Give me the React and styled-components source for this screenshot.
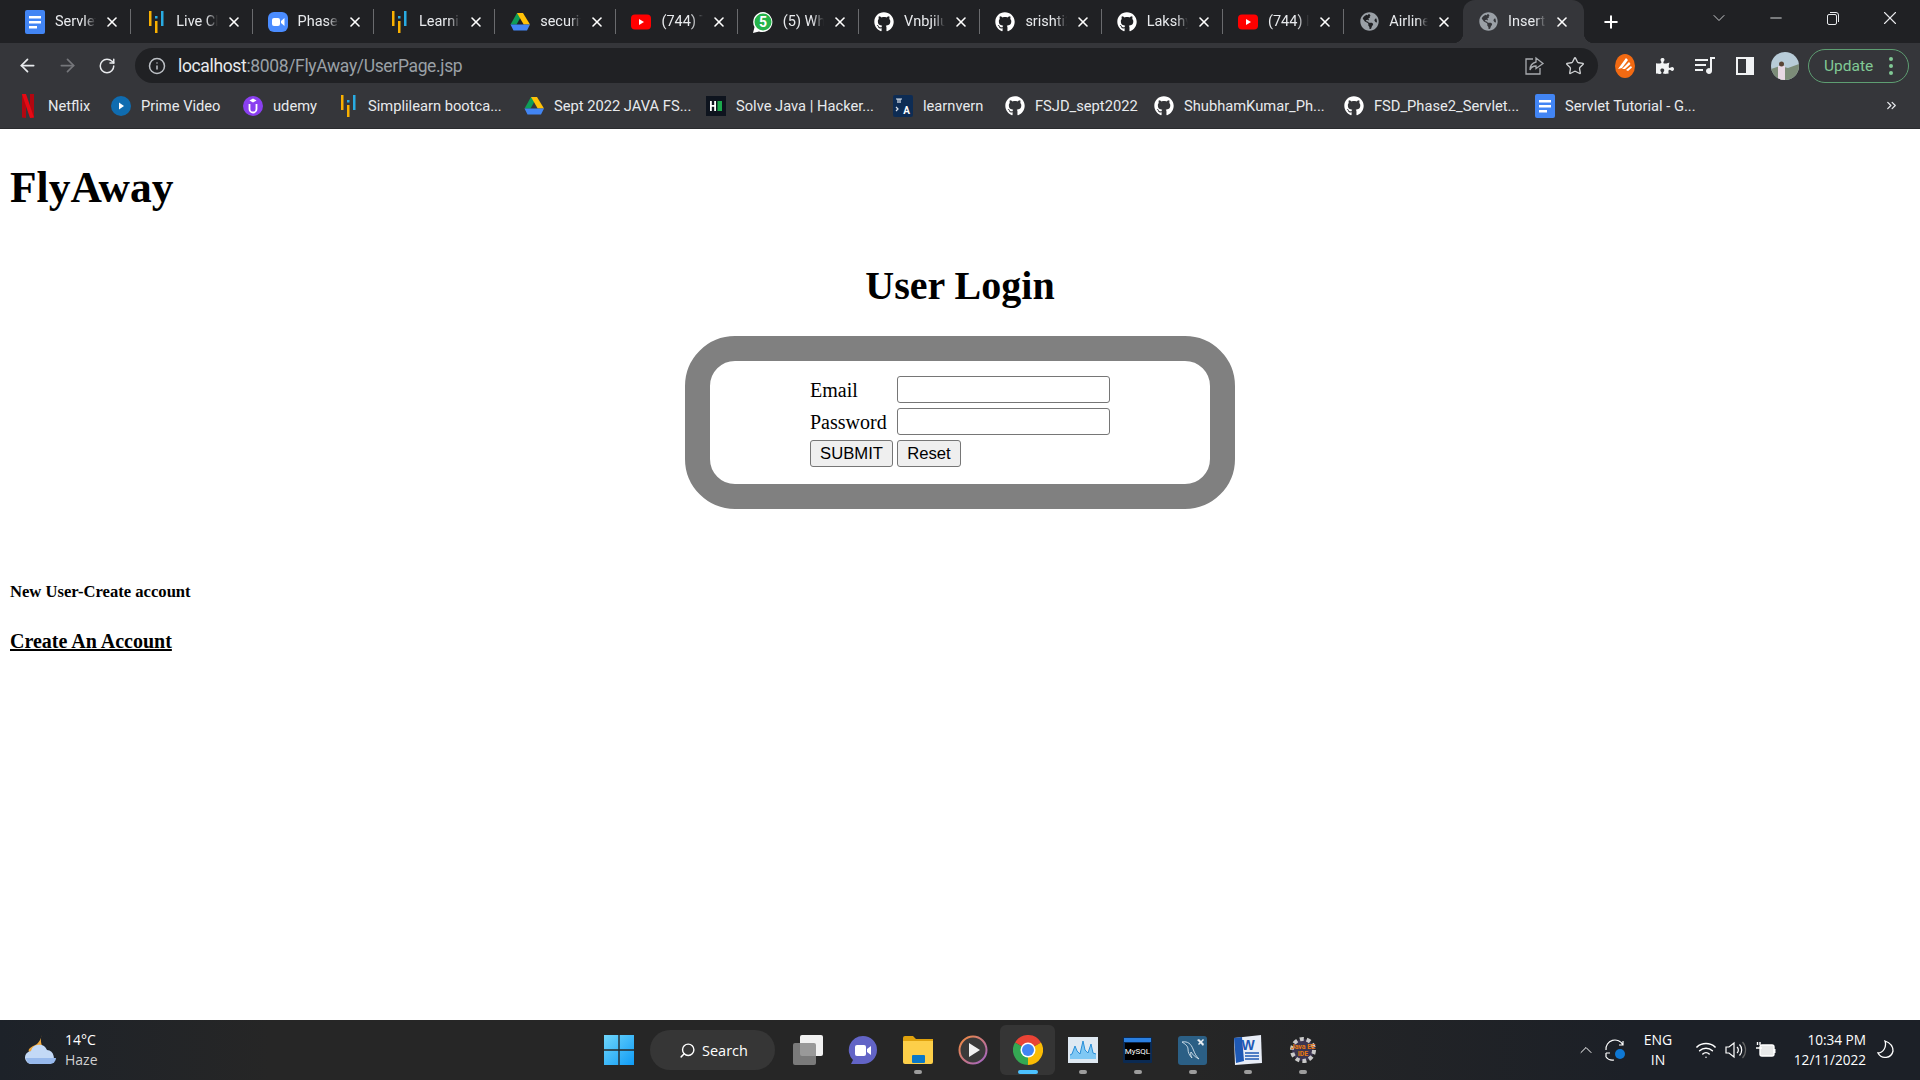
import React from 'react';
import styled, { createGlobalStyle } from 'styled-components';
import { ArrowLeft, ArrowRight, RotateCw, Info, Star, X, Plus, ChevronDown, ChevronUp, ChevronsRight, Minus, Search, Wifi } from 'lucide-react';
import { FaGithub, FaGlobeAmericas, FaPuzzlePiece } from 'react-icons/fa';

const GlobalStyle = createGlobalStyle`
    html, body { margin: 0; padding: 0; background: #fff; }
    body { font-family: "Liberation Serif", "Times New Roman", serif; overflow: hidden; }
`;

const UI_FONT = '"Roboto", "Noto Sans", sans-serif';

const Screen = styled.div`
    width: 1920px;
    height: 1080px;
    display: flex;
    flex-direction: column;
`;

/* ---- favicons ---- */
const DocsIcon = () => (
    <svg width="20" height="24" viewBox="0 0 20 24">
        <rect width="20" height="24" rx="2" fill="#4285f4" />
        <path d="M4 6h12v2.500H4zM4 11h12v2.500H4zM4 16h8v2.500H4z" fill="#fff" />
    </svg>
);
const BarsIcon = () => (
    <svg width="20" height="24" viewBox="0 0 20 24">
        <rect x="3" y="1" width="2.5" height="15" fill="#f9b000" />
        <rect x="9" y="11" width="2.5" height="12" fill="#f9b000" />
        <rect x="9" y="6" width="2.5" height="2.5" fill="#29abe2" />
        <rect x="15" y="1" width="2.5" height="15" fill="#29abe2" />
    </svg>
);
const ZoomIcon = () => (
    <svg width="20" height="24" viewBox="0 0 20 24">
        <rect y="2" width="20" height="20" rx="6" fill="#4a8cff" />
        <rect x="4" y="8" width="8" height="8" rx="2" fill="#fff" />
        <path d="M13 11l3.500-3v8l-3.500-3z" fill="#fff" />
    </svg>
);
const DriveIcon = () => (
    <svg width="20" height="18" viewBox="0 0 20 18">
        <path d="M7 0h6l-6.500 11.500h-6z" fill="#0f9d58" />
        <path d="M7 0h6l7 11.500h-6.300z" fill="#ffc107" />
        <path d="M0.500 11.500l3 6h13.500l3-6z" fill="#4285f4" />
    </svg>
);
const YoutubeIcon = () => (
    <svg width="20" height="16" viewBox="0 0 20 16">
        <rect width="20" height="15" y="0.500" rx="4" fill="#f00" />
        <path d="M8 5l5 3-5 3z" fill="#fff" />
    </svg>
);
const WhatsappIcon = () => (
    <svg width="20" height="24" viewBox="0 0 20 24">
        <path d="M10 2a10 10 0 0 0-8.500 15L0 23l6-1.600A10 10 0 1 0 10 2z" fill="#fff" />
        <circle cx="10" cy="12" r="8.500" fill="#25b34a" />
        <text x="10" y="17" textAnchor="middle" fontSize="14" fontWeight="700" fill="#fff" fontFamily="Roboto, sans-serif">5</text>
    </svg>
);
const NetflixIcon = () => (
    <svg width="14" height="24" viewBox="0 0 14 24">
        <path d="M1 0h4v24l-4-.6z" fill="#b20710" />
        <path d="M9 0h4v23.400l-4 .6z" fill="#b20710" />
        <path d="M1 0h4l8 23.400-4 .6z" fill="#e50914" />
    </svg>
);
const PrimeIcon = () => (
    <svg width="20" height="24" viewBox="0 0 20 24">
        <circle cx="10" cy="12" r="10" fill="#0f6cb0" />
        <path d="M8 8.500l5 3.500-5 3.500z" fill="#fff" />
    </svg>
);
const UdemyIcon = () => (
    <svg width="20" height="24" viewBox="0 0 20 24">
        <circle cx="10" cy="12" r="10" fill="#8a3ff0" />
        <path d="M6.500 10v5a3.500 3.500 0 0 0 7 0v-5" fill="none" stroke="#fff" strokeWidth="1.800" />
        <path d="M10 4.500l3.500 2-3.500 2-3.500-2z" fill="#fff" />
    </svg>
);
const HackerIcon = () => (
    <svg width="20" height="20" viewBox="0 0 20 20">
        <rect width="20" height="20" fill="#0e141e" />
        <path d="M4 5h1.800v4h2.400V5H10v10H8.200v-4.200H5.800V15H4z" fill="#fff" />
        <rect x="11.500" y="5" width="4.500" height="10" fill="#1ba94c" />
    </svg>
);
const LearnvernIcon = () => (
    <svg width="20" height="24" viewBox="0 0 20 24">
        <rect y="1" width="20" height="22" rx="2" fill="#0d2c54" />
        <path d="M3 5h6M5 5v4M7 5v4M3 13l2 2-2 2" stroke="#dfe6ee" strokeWidth="1.200" fill="none" />
        <text x="13.500" y="20" textAnchor="middle" fontSize="10" fontWeight="700" fill="#fff" fontFamily="Roboto, sans-serif">A</text>
    </svg>
);
const GithubIcon = () => <FaGithub size={20} color="#fff" />;
const GlobeIcon = () => <FaGlobeAmericas size={19} color="#9aa0a6" />;

/* ---- tab strip ---- */
const TabStrip = styled.div`
    height: 43px;
    flex: none;
    background: #202124;
    display: flex;
    align-items: stretch;
    padding-left: 10px;
    font-family: ${UI_FONT};
    position: relative;
`;

const Tab = styled.div`
    width: ${(props) => props.$w || 121.3}px;
    box-sizing: border-box;
    flex: none;
    display: flex;
    align-items: center;
    padding: 0 ${(props) => (props.$active ? 14 : 11)}px 0 15px;
    gap: 8px;
    position: relative;
    color: #e8eaed;
    background: ${(props) => (props.$active ? '#35363a' : 'transparent')};
    border-radius: ${(props) => (props.$active ? '12px 12px 0 0' : '0')};

    &::after {
        content: '';
        position: absolute;
        right: 0;
        top: 9px;
        bottom: 9px;
        width: 1px;
        background: ${(props) => (props.$noSep ? 'transparent' : '#6a6b6e')};
    }
`;

const Flare = styled.span`
    position: absolute;
    bottom: 0;
    width: 10px;
    height: 10px;
    ${(props) => (props.$side === 'left'
        ? 'left: -10px; background: radial-gradient(circle at 0 0, transparent 10px, #35363a 10.5px);'
        : 'right: -10px; background: radial-gradient(circle at 100% 0, transparent 10px, #35363a 10.5px);')}
`;

const FavSlot = styled.span`
    width: 20px;
    height: 24px;
    flex: none;
    display: flex;
    align-items: center;
    justify-content: center;
    margin-right: 2px;
`;

const TabTitle = styled.span`
    flex: 1;
    min-width: 0;
    overflow: hidden;
    white-space: nowrap;
    font-size: 14.5px;
    -webkit-mask-image: linear-gradient(to right, #000 72%, transparent 100%);
    mask-image: linear-gradient(to right, #000 72%, transparent 100%);
`;

const NewTab = styled.div`
    width: 54px;
    display: flex;
    align-items: center;
    justify-content: center;
    color: #fff;
`;

const WindowControls = styled.div`
    margin-left: auto;
    margin-right: 1.5px;
    display: flex;
    align-items: flex-start;
    color: #e8eaed;
`;

const WinButton = styled.div`
    width: 57px;
    height: 36px;
    display: flex;
    align-items: center;
    justify-content: center;
`;

/* ---- toolbar ---- */
const Toolbar = styled.div`
    height: 41px;
    flex: none;
    box-sizing: border-box;
    background: #35363a;
    display: flex;
    align-items: flex-start;
    padding-top: 5px;
    font-family: ${UI_FONT};
`;

const NavButtons = styled.div`
    width: 135px;
    flex: none;
    height: 35px;
    display: flex;
    align-items: center;
    padding-left: 7px;
    box-sizing: border-box;
`;

const NavSlot = styled.span`
    width: 40px;
    display: flex;
    justify-content: center;
    color: ${(props) => (props.$dim ? '#75767a' : '#e8eaed')};
`;

const UrlBox = styled.div`
    width: 1463px;
    height: 35px;
    flex: none;
    background: #202124;
    border-radius: 18px;
    display: flex;
    align-items: center;
    padding: 0 3px 0 13px;
    box-sizing: border-box;
    color: #bdc1c6;
`;

const UrlText = styled.div`
    margin-left: 12px;
    font-size: 17.5px;
    letter-spacing: -0.35px;
    color: #9aa0a6;
    flex: 1;
    b { font-weight: 400; color: #e8eaed; }
`;

const UrlAction = styled.span`
    width: 40px;
    display: flex;
    justify-content: center;
    color: #d0d2d4;
`;

const ToolIcons = styled.div`
    display: flex;
    height: 35px;
    align-items: center;
    margin-left: 7px;
`;

const ToolSlot = styled.span`
    width: 40px;
    display: flex;
    justify-content: center;
    color: #f1f3f4;
`;

const UpdatePill = styled.div`
    margin-left: 3px;
    width: 101px;
    height: 34px;
    box-sizing: border-box;
    border: 1.5px solid #5e9e72;
    border-radius: 17px;
    display: flex;
    align-items: center;
    padding-left: 15px;
    color: #81c995;
    font-size: 15.5px;
`;

const Dots = styled.span`
    margin-left: 16px;
    width: 4px;
    display: flex;
    flex-direction: column;
    gap: 3px;
    i { width: 4px; height: 4px; border-radius: 50%; background: #81c995; display: block; }
`;

/* ---- bookmarks ---- */
const BookmarkBar = styled.div`
    height: 44.5px;
    flex: none;
    box-sizing: border-box;
    background: #35363a;
    border-bottom: 1px solid #2a2b2e;
    display: flex;
    align-items: center;
    padding-left: 18px;
    font-family: ${UI_FONT};
    color: #e8eaed;
    font-size: 14.7px;
`;

const Bookmark = styled.div`
    width: ${(props) => props.$w}px;
    flex: none;
    display: flex;
    align-items: center;
    gap: 8px;
    white-space: nowrap;
`;

const MoreBookmarks = styled.div`
    margin-left: auto;
    margin-right: 21px;
    display: flex;
    color: #e8eaed;
`;

/* ---- page ---- */
const Page = styled.main`
    flex: 1;
    background: #fff;
    padding: 0 10px;
    color: #000;
    overflow: hidden;
`;

const Logo = styled.h1`
    margin: 33px 0 0;
    font-size: 43.5px;
    line-height: 50px;
    font-weight: 700;
`;

const Title = styled.h1`
    margin: 51.5px 0 0;
    font-size: 40px;
    line-height: 46px;
    font-weight: 700;
    text-align: center;
`;

const LoginBox = styled.form`
    width: 400px;
    margin: 26.5px auto 0;
    border: 25px solid #808080;
    border-radius: 50px;
    padding: 15px 0 17px 100px;
    display: grid;
    grid-template-columns: 87px 213px;
    grid-auto-rows: 27.3px;
    row-gap: 5px;
    align-items: center;
    box-sizing: content-box;
`;

const Label = styled.label`
    font-size: 20px;
    padding-top: 2px;
`;

const TextInput = styled.input`
    width: 213px;
    height: 27.3px;
    box-sizing: border-box;
    border: 1.25px solid #767676;
    border-radius: 3px;
    background: #fff;
    padding: 0 3px;
    margin: 0;
`;

const FormButton = styled.button`
    height: 27.3px;
    width: ${(props) => props.$w}px;
    box-sizing: border-box;
    border: 1.25px solid #767676;
    border-radius: 3px;
    background: #efefef;
    color: #000;
    font-family: "Liberation Sans", Arial, sans-serif;
    font-size: 16.67px;
    padding: 0;
    margin: 0;
    display: block;
`;

const NewUser = styled.h5`
    margin: 73px 0 0;
    font-size: 16.6px;
    line-height: 19px;
    font-weight: 700;
`;

const CreateLink = styled.a`
    display: block;
    margin-top: 29px;
    font-size: 20px;
    line-height: 23px;
    font-weight: 700;
    color: #000;
    text-decoration: underline;
`;

/* ---- taskbar ---- */
const Taskbar = styled.footer`
    height: 60px;
    flex: none;
    display: grid;
    grid-template-columns: 1fr auto 1fr;
    align-items: center;
    background: linear-gradient(to right, #1d2229 0, #262626 14%, #262626 62%, #1c2027 85%, #1c2027 100%);
    color: #fff;
    font-family: "Open Sans", "Noto Sans", sans-serif;
    font-size: 14px;
`;

const Weather = styled.div`
    display: flex;
    align-items: center;
    gap: 8px;
    padding-left: 25px;
`;

const TwoLines = styled.div`
    display: flex;
    flex-direction: column;
    line-height: 20px;
    align-items: ${(props) => props.$align || 'flex-start'};
    font-size: ${(props) => props.$size || 14}px;
    span:last-child { color: ${(props) => props.$dim || '#fff'}; }
`;

const Apps = styled.div`
    display: flex;
    align-items: center;
    height: 60px;
    margin-left: 1px;
`;

const SearchPill = styled.div`
    width: 125px;
    height: 40px;
    margin: 0 5px 0 4px;
    border-radius: 20px;
    background: #363636;
    display: flex;
    align-items: center;
    justify-content: center;
    gap: 6px;
    font-size: 14.5px;
    padding-left: 2px;
    box-sizing: border-box;
`;

const AppSlot = styled.div`
    width: 55px;
    height: 50px;
    flex: none;
    display: flex;
    align-items: center;
    justify-content: center;
    position: relative;
    border-radius: 6px;
    background: ${(props) => (props.$active ? '#353535' : 'transparent')};

    &::after {
        content: ${(props) => (props.$dot ? "''" : 'none')};
        position: absolute;
        bottom: 1px;
        left: 50%;
        transform: translateX(-50%);
        width: ${(props) => (props.$active ? '20px' : '8px')};
        height: 4px;
        border-radius: 2px;
        background: ${(props) => (props.$active ? '#4cc2ff' : '#9d9d9d')};
    }
`;

const Tray = styled.div`
    display: flex;
    align-items: center;
    justify-content: flex-end;
    padding-right: 19px;
    color: #fff;
`;

const TraySlot = styled.span`
    width: ${(props) => props.$w || 30}px;
    display: flex;
    justify-content: center;
`;

const TrayText = styled.div`
    width: ${(props) => props.$w}px;
    text-align: center;
    margin: ${(props) => props.$m || '0'};
`;

/* ---- taskbar icons ---- */
const WeatherIcon = () => (
    <svg width="32" height="30" viewBox="0 0 32 30">
        <path d="M17 0c-2 4-1 9 1 13L4 17C2 13 9 11 12 9c2-2 4-5 5-9z" fill="#f2a93b" />
        <path d="M7 29a6.500 6.500 0 0 1-1-13 8.500 8.500 0 0 1 16-1 7.500 7.500 0 0 1 3 14z" fill="#c3d9f6" />
        <path d="M1 23a6 6 0 0 0 6 6h18a6 6 0 0 0 6-6z" fill="#97b9ec" />
    </svg>
);
const WindowsIcon = () => (
    <svg width="30" height="30" viewBox="0 0 30 30">
        <defs>
            <linearGradient id="win" x1="0" y1="0" x2="1" y2="1">
                <stop offset="0" stopColor="#6fd6fb" />
                <stop offset="1" stopColor="#0f9bf5" />
            </linearGradient>
        </defs>
        <path d="M0 0h14.300v14.300H0zM15.700 0H30v14.300H15.700zM0 15.700h14.300V30H0zM15.700 15.700H30V30H15.700z" fill="url(#win)" />
    </svg>
);
const TaskViewIcon = () => (
    <svg width="30" height="30" viewBox="0 0 30 30">
        <rect x="7" y="0" width="23" height="21" rx="2" fill="#f1f1f1" />
        <rect x="0" y="8" width="23" height="22" rx="2" fill="#8a8a8a" fillOpacity="0.85" />
    </svg>
);
const MeetIcon = () => (
    <svg width="30" height="30" viewBox="0 0 30 30">
        <path d="M15 1a14 14 0 0 1 0 28H3l2-4A14 14 0 0 1 15 1z" fill="#6264c6" />
        <rect x="7" y="10" width="11" height="11" rx="2" fill="#fff" />
        <path d="M19 14l4-3v9l-4-3z" fill="#fff" />
    </svg>
);
const FolderIcon = () => (
    <svg width="30" height="28" viewBox="0 0 30 28">
        <path d="M0 2a2 2 0 0 1 2-2h8l3 3h17v6H0z" fill="#e0a20d" />
        <path d="M0 5h30v21a2 2 0 0 1-2 2H2a2 2 0 0 1-2-2z" fill="#fdcf49" />
        <rect x="9" y="19" width="13" height="8" rx="1" fill="#0a78c8" />
    </svg>
);
const PlayerIcon = () => (
    <svg width="30" height="30" viewBox="0 0 30 30">
        <defs>
            <linearGradient id="ring" x1="0" y1="0" x2="1" y2="1">
                <stop offset="0" stopColor="#f28b3c" />
                <stop offset="1" stopColor="#9f63c9" />
            </linearGradient>
        </defs>
        <circle cx="15" cy="15" r="13.500" fill="#3a3a3a" stroke="url(#ring)" strokeWidth="2" />
        <path d="M11 8l11 7-11 7z" fill="#f2f2f2" />
    </svg>
);
const ChromeIcon = () => (
    <svg width="30" height="30" viewBox="0 0 30 30">
        <path d="M15 15L2 7.500A15 15 0 0 1 28 7.500z" fill="#ea4335" />
        <path d="M15 15L28 7.500A15 15 0 0 1 15 30z" fill="#fbbc05" />
        <path d="M15 15L15 30A15 15 0 0 1 2 7.500z" fill="#34a853" />
        <circle cx="15" cy="15" r="7.500" fill="#fff" />
        <circle cx="15" cy="15" r="6" fill="#4285f4" />
    </svg>
);
const ChartIcon = () => (
    <svg width="30" height="26" viewBox="0 0 30 26">
        <rect width="30" height="26" fill="#dfe9f2" />
        <path d="M2 22h26V17l-3-1-2-9-3 9-3-3-2-9-3 13-3-3-2-5-3 8-2 1z" fill="#7fc8f4" />
        <path d="M2 18l2-1 3-8 2 5 3 3 3-13 2 9 3 3 3-9 2 9 3 1" fill="none" stroke="#2a8fd8" strokeWidth="1" />
    </svg>
);
const MysqlIcon = () => (
    <svg width="29" height="26" viewBox="0 0 29 26">
        <rect width="29" height="26" rx="1" fill="#0b2a52" />
        <rect x="1" y="1" width="27" height="4" fill="#2a7fe0" />
        <rect x="2" y="6" width="25" height="17" fill="#000" />
        <text x="14.500" y="17" textAnchor="middle" fontSize="8" fill="#fff" fontFamily="Roboto, sans-serif">MySQL</text>
    </svg>
);
const WorkbenchIcon = () => (
    <svg width="29" height="29" viewBox="0 0 29 29">
        <rect width="29" height="29" rx="3" fill="#2b5f85" />
        <path d="M4 6c6-1 9 2 11 7s3 7 6 10c-4-2-6-4-8-7-1 2 0 4 1 6-3-3-4-6-4-9S7 8 4 6z" fill="none" stroke="#d6e4ee" strokeWidth="0.900" />
        <path d="M20 8l5-5 1 1-5 5z" fill="#e8eef3" />
        <path d="M19 4l2-1 5 5-1 2z" fill="#e8eef3" />
    </svg>
);
const WordIcon = () => (
    <svg width="29" height="30" viewBox="0 0 29 30">
        <path d="M1 3l27-3 1 28-27 2z" fill="#e9eef7" />
        <path d="M1 3l8-1 2 24-8 2z" fill="#1e59b5" />
        <text x="15" y="15" textAnchor="middle" fontSize="14" fontWeight="700" fill="#1e59b5" fontFamily="Liberation Sans, sans-serif">W</text>
        <path d="M12 18h14M12 21h14M12 24h14" stroke="#1e59b5" strokeWidth="1.500" />
    </svg>
);
const JavaEEIcon = () => (
    <svg width="30" height="30" viewBox="0 0 30 30">
        <circle cx="15" cy="15" r="11" fill="#3b3550" stroke="#c9c9c9" strokeWidth="4" strokeDasharray="4 2.900" />
        <text x="15" y="13.500" textAnchor="middle" fontSize="7" fontWeight="700" fill="#e87a10" fontFamily="Roboto, sans-serif">Java EE</text>
        <text x="15" y="21" textAnchor="middle" fontSize="7" fontWeight="700" fill="#e87a10" fontFamily="Roboto, sans-serif">IDE</text>
    </svg>
);

/* ---- tray + toolbar icons ---- */
const SyncIcon = () => (
    <svg width="22" height="24" viewBox="0 0 22 24" fill="none" stroke="#fff" strokeWidth="1.200">
        <path d="M1 12a9 9 0 0 1 17-5M18 3v4h-4" />
        <path d="M1 15h4M1 15v4M1 19a8 8 0 0 0 8 3" />
        <circle cx="15" cy="16" r="5" fill="#0f78d4" stroke="none" />
    </svg>
);
const SpeakerIcon = () => (
    <svg width="22" height="20" viewBox="0 0 22 20" fill="none" stroke="#fff" strokeWidth="1.200">
        <path d="M1 7v6h3l5 4V3L4 7z" />
        <path d="M12 7a4 4 0 0 1 0 6M14.500 4.500a8 8 0 0 1 0 11" />
        <path d="M17.500 2a12 12 0 0 1 0 16" stroke="#666" />
    </svg>
);
const BatteryIcon = () => (
    <svg width="22" height="18" viewBox="0 0 22 18" fill="none" stroke="#fff" strokeWidth="1.400">
        <rect x="5" y="4" width="14" height="11" rx="2" fill="#fff" fillOpacity="0.9" />
        <path d="M19.500 8v4" strokeWidth="2" />
        <path d="M1 7h6M2.500 4V1M5 4V1" />
    </svg>
);
const MoonIcon = () => (
    <svg width="18" height="20" viewBox="0 0 18 20" fill="none" stroke="#fff" strokeWidth="1.300">
        <path d="M8 1c3 1 8 4 8 10a8 8 0 0 1-15 2c5 0 9-6 7-12z" />
    </svg>
);
const ShareIcon = () => (
    <svg width="20" height="20" viewBox="0 0 20 20" fill="none" stroke="#a8abaf" strokeWidth="1.300">
        <path d="M8 3H1v15h14v-6" />
        <path d="M11 2l7 5.500-7 5V10c-3 0-5 1-6 4 0-4 2-7 6-8z" />
    </svg>
);
const OrangeExtIcon = () => (
    <svg width="20" height="24" viewBox="0 0 20 24">
        <ellipse cx="10" cy="12" rx="10" ry="12" fill="#f26a12" />
        <path d="M3 15L11 4l2 2-6 8zM7 15l7-7 1.500 2L10 15zM11 16l5-4 1 1.500-4 3.500z" fill="#fff" />
    </svg>
);
const QueueIcon = () => (
    <svg width="20" height="20" viewBox="0 0 20 20" fill="#f1f3f4">
        <path d="M0 3h13v2H0zM0 8h11v2H0zM0 13h8v2H0z" />
        <path d="M15 1h5v2h-3v12a3 3 0 1 1-2-2.800z" />
    </svg>
);
const SidePanelIcon = () => (
    <svg width="18" height="18" viewBox="0 0 18 18">
        <rect width="18" height="18" fill="#f1f3f4" />
        <rect x="2" y="2" width="8" height="14" fill="#35363a" />
    </svg>
);
const AvatarIcon = () => (
    <svg width="28" height="28" viewBox="0 0 28 28">
        <defs>
            <clipPath id="ava"><circle cx="14" cy="14" r="14" /></clipPath>
        </defs>
        <g clipPath="url(#ava)">
            <rect width="28" height="28" fill="#b8ccd8" />
            <path d="M0 17l9-3 8 2 11-4v16H0z" fill="#7c8c78" />
            <rect x="7" y="14" width="7" height="14" fill="#e8d8e4" />
            <circle cx="10.500" cy="12" r="2.500" fill="#5a4436" />
        </g>
    </svg>
);
const RestoreIcon = () => (
    <svg width="12" height="13" viewBox="0 0 12 13" fill="none" stroke="#e8eaed">
        <rect x="0.500" y="2.500" width="9" height="10" rx="1.500" />
        <path d="M3 0.500h6a2.500 2.500 0 0 1 2.500 2.500v7" />
    </svg>
);

const tabs = [
    { icon: <DocsIcon />, title: 'Servlet Tutorial' },
    { icon: <BarsIcon />, title: 'Live Class' },
    { icon: <ZoomIcon />, title: 'Phase-2' },
    { icon: <BarsIcon />, title: 'Learning' },
    { icon: <DriveIcon />, title: 'security' },
    { icon: <YoutubeIcon />, title: '(744) The' },
    { icon: <WhatsappIcon />, title: '(5) WhatsApp' },
    { icon: <GithubIcon />, title: 'Vnbjilu' },
    { icon: <GithubIcon />, title: 'srishti2' },
    { icon: <GithubIcon />, title: 'Lakshya' },
    { icon: <YoutubeIcon />, title: '(744) How' },
    { icon: <GlobeIcon />, title: 'Airline', w: 118.8 },
];

const bookmarks = [
    { icon: <NetflixIcon />, label: 'Netflix', w: 93 },
    { icon: <PrimeIcon />, label: 'Prime Video', w: 132 },
    { icon: <UdemyIcon />, label: 'udemy', w: 95 },
    { icon: <BarsIcon />, label: 'Simplilearn bootca...', w: 186 },
    { icon: <DriveIcon />, label: 'Sept 2022 JAVA FS...', w: 182 },
    { icon: <HackerIcon />, label: 'Solve Java | Hacker...', w: 187 },
    { icon: <LearnvernIcon />, label: 'learnvern', w: 112 },
    { icon: <GithubIcon />, label: 'FSJD_sept2022', w: 149 },
    { icon: <GithubIcon />, label: 'ShubhamKumar_Ph...', w: 190 },
    { icon: <GithubIcon />, label: 'FSD_Phase2_Servlet...', w: 191 },
    { icon: <DocsIcon />, label: 'Servlet Tutorial - G...', w: 160 },
];

const apps = [
    { icon: <TaskViewIcon /> },
    { icon: <MeetIcon /> },
    { icon: <FolderIcon />, dot: true },
    { icon: <PlayerIcon /> },
    { icon: <ChromeIcon />, dot: true, active: true },
    { icon: <ChartIcon />, dot: true },
    { icon: <MysqlIcon />, dot: true },
    { icon: <WorkbenchIcon />, dot: true },
    { icon: <WordIcon />, dot: true },
    { icon: <JavaEEIcon />, dot: true },
];

export default function App() {
    return (
        <Screen>
            <GlobalStyle />
            <TabStrip>
                {tabs.map((tab, i) => (
                    <Tab key={i} $w={tab.w} $noSep={i === tabs.length - 1}>
                        <FavSlot>{tab.icon}</FavSlot>
                        <TabTitle>{tab.title}</TabTitle>
                        <X size={16} strokeWidth={2.4} color="#fff" />
                    </Tab>
                ))}
                <Tab $active $noSep>
                    <Flare $side="left" />
                    <FavSlot><GlobeIcon /></FavSlot>
                    <TabTitle>Insert Title</TabTitle>
                    <X size={16} strokeWidth={2.4} color="#fff" />
                    <Flare $side="right" />
                </Tab>
                <NewTab><Plus size={20} strokeWidth={2.4} /></NewTab>
                <WindowControls>
                    <WinButton><ChevronDown size={20} strokeWidth={1} /></WinButton>
                    <WinButton><Minus size={18} strokeWidth={1.2} /></WinButton>
                    <WinButton><RestoreIcon /></WinButton>
                    <WinButton><X size={22} strokeWidth={1.2} /></WinButton>
                </WindowControls>
            </TabStrip>

            <Toolbar>
                <NavButtons>
                    <NavSlot><ArrowLeft size={21} strokeWidth={2} /></NavSlot>
                    <NavSlot $dim><ArrowRight size={21} strokeWidth={2} /></NavSlot>
                    <NavSlot><RotateCw size={18} strokeWidth={2} /></NavSlot>
                </NavButtons>
                <UrlBox>
                    <Info size={18} />
                    <UrlText><b>localhost</b>:8008/FlyAway/UserPage.jsp</UrlText>
                    <UrlAction><ShareIcon /></UrlAction>
                    <UrlAction><Star size={20} strokeWidth={1.6} /></UrlAction>
                </UrlBox>
                <ToolIcons>
                    <ToolSlot><OrangeExtIcon /></ToolSlot>
                    <ToolSlot><FaPuzzlePiece size={18} /></ToolSlot>
                    <ToolSlot><QueueIcon /></ToolSlot>
                    <ToolSlot><SidePanelIcon /></ToolSlot>
                    <ToolSlot><AvatarIcon /></ToolSlot>
                    <UpdatePill>
                        Update
                        <Dots><i /><i /><i /></Dots>
                    </UpdatePill>
                </ToolIcons>
            </Toolbar>

            <BookmarkBar>
                {bookmarks.map((mark) => (
                    <Bookmark key={mark.label} $w={mark.w}>
                        <FavSlot>{mark.icon}</FavSlot>
                        {mark.label}
                    </Bookmark>
                ))}
                <MoreBookmarks><ChevronsRight size={15} /></MoreBookmarks>
            </BookmarkBar>

            <Page>
                <Logo>FlyAway</Logo>
                <Title>User Login</Title>
                <LoginBox>
                    <Label>Email</Label>
                    <TextInput type="text" />
                    <Label>Password</Label>
                    <TextInput type="password" />
                    <div>
                        <FormButton type="button" $w={83}>SUBMIT</FormButton>
                    </div>
                    <div>
                        <FormButton type="button" $w={64}>Reset</FormButton>
                    </div>
                </LoginBox>
                <NewUser>New User-Create account</NewUser>
                <CreateLink href="#">Create An Account</CreateLink>
            </Page>

            <Taskbar>
                <Weather>
                    <WeatherIcon />
                    <TwoLines $dim="#d0d0d0">
                        <span>14°C</span>
                        <span>Haze</span>
                    </TwoLines>
                </Weather>
                <Apps>
                    <AppSlot><WindowsIcon /></AppSlot>
                    <SearchPill>
                        <Search size={17} style={{ transform: 'scaleX(-1)' }} />
                        Search
                    </SearchPill>
                    {apps.map((app, i) => (
                        <AppSlot key={i} $dot={app.dot} $active={app.active}>{app.icon}</AppSlot>
                    ))}
                </Apps>
                <Tray>
                    <TraySlot><ChevronUp size={20} strokeWidth={1.2} /></TraySlot>
                    <TraySlot><SyncIcon /></TraySlot>
                    <TrayText $w={40} $m="0 13px 0 7px">
                        <TwoLines $align="center"><span>ENG</span><span>IN</span></TwoLines>
                    </TrayText>
                    <TraySlot $w={29}><Wifi size={22} strokeWidth={1.6} /></TraySlot>
                    <TraySlot $w={31}><SpeakerIcon /></TraySlot>
                    <TraySlot><BatteryIcon /></TraySlot>
                    <TrayText $w={85} $m="0 5px 0 0">
                        <TwoLines $align="flex-end" $size={13.6}><span>10:34 PM</span><span>12/11/2022</span></TwoLines>
                    </TrayText>
                    <TraySlot><MoonIcon /></TraySlot>
                </Tray>
            </Taskbar>
        </Screen>
    );
}
